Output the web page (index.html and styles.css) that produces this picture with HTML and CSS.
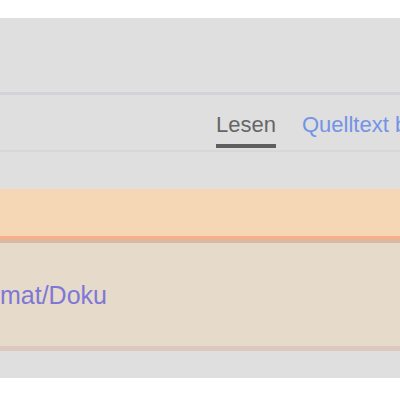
FILE: index.html
```html
<!DOCTYPE html>
<html lang="de">
<head>
<meta charset="utf-8">
<title>Bildformat/Doku</title>
<link rel="stylesheet" href="styles.css">
</head>
<body>
<div class="page">
  <div class="header"></div>
  <nav class="tabs">
    <span class="tab selected">Lesen</span>
    <a class="tab" href="#">Quelltext bearbeiten</a>
  </nav>
  <div class="notice"></div>
  <div class="box">
    <div class="box-link"><a href="#">Vorlage:Bildformat/Doku</a></div>
  </div>
</div>
</body>
</html>
```
FILE: styles.css
```css
html, body {
  margin: 0;
  padding: 0;
  background: #ffffff;
  font-family: "Liberation Sans", Arial, sans-serif;
}
.page {
  margin-top: 18px;
  background: #dfdfdf;
  display: flex;
  flex-direction: column;
  height: 360px;
  overflow: hidden;
}
.header {
  height: 74px;
  border-bottom: 3px solid #d1d3d7;
}
.tabs {
  display: flex;
  gap: 26px;
  padding-left: 216px;
  height: 55px;
  border-bottom: 2px solid #d8d8d9;
  white-space: nowrap;
  overflow: hidden;
}
.tab {
  font-size: 22px;
  line-height: 22px;
  padding-top: 19px;
  text-decoration: none;
  color: #7393e6;
}
.tab.selected {
  color: #666666;
  height: 30px;
  border-bottom: 4px solid #5e5e5e;
}
.notice {
  margin-top: 37px;
  height: 47px;
  background: #f5d6b5;
  border-bottom: 3px solid #fbad86;
  box-shadow: 0 4px 0 #d9b8a6;
}
.box {
  margin-top: 4px;
  height: 103px;
  background: #e6dacb;
  border-bottom: 5px solid #dcc8bc;
  display: flex;
  align-items: center;
}
.box-link {
  width: 107px;
  display: flex;
  justify-content: flex-end;
  white-space: nowrap;
  font-size: 25px;
  line-height: 25px;
  padding-top: 2px;
}
.box-link a {
  color: #7f77d6;
  text-decoration: none;
}
```
